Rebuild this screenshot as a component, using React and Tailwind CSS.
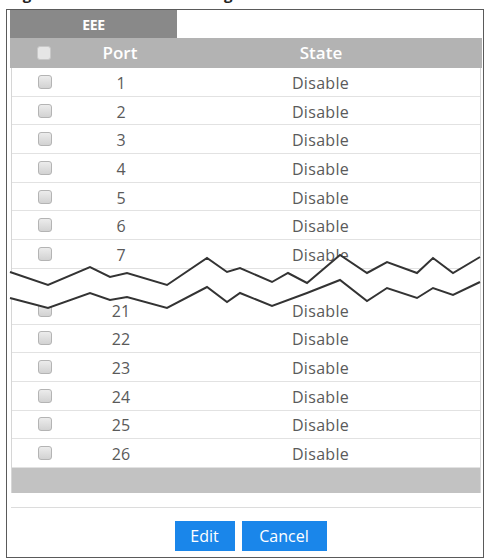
import React from 'react';

const top = [
  [10, 272], [48, 285], [90, 267], [110, 277], [127, 273], [167, 285], [207, 258], [227, 272],
  [240, 268], [272, 282], [288, 273], [307, 283], [340, 255], [367, 273], [387, 262], [417, 273],
  [433, 258], [453, 273], [480, 257],
];
const bottom = [
  [10, 298], [48, 308], [90, 293], [110, 300], [127, 297], [167, 308], [207, 287], [227, 302],
  [240, 293], [272, 306], [307, 293], [340, 280], [367, 301], [387, 288], [417, 298], [433, 288],
  [453, 295], [480, 282],
];
const pts = (list) => list.map((p) => p.join(',')).join(' ');

function Box({ header }) {
  return (
    <span
      className={`block w-[14px] h-[14px] rounded-[3px] border ${
        header ? 'border-[#c8c8c8] bg-[#e6e6e6]' : 'border-[#b4b4b4] bg-gradient-to-b from-[#ececec] to-[#d2d2d2]'
      }`}
    />
  );
}

function Row({ port }) {
  return (
    <div className="flex items-center h-[28.7px] border-b border-[#e2e2e2] text-[#5a5a5a] text-[16px]">
      <div className="w-[64px] flex justify-center pl-[1px]">
        <Box />
      </div>
      <div className="w-[90px] text-center pt-[2px]">{port}</div>
      <div className="flex-1 text-center pt-[2px] pr-[5px] tracking-[0.3px]">Disable</div>
    </div>
  );
}

export default function App() {
  return (
    <div className="relative w-[487px] h-[560px] bg-white overflow-hidden" style={{ fontFamily: '"Open Sans", "DejaVu Sans", sans-serif' }}>
      {/* figure caption, cut off at the top edge */}
      <div className="h-[9px] overflow-hidden">
        <div className="-mt-[17px] pl-[10px] text-[15px] leading-[22px] font-bold text-[#222] whitespace-nowrap">
          Figure 88 &nbsp; Port &gt; EEE &gt; Settings
        </div>
      </div>

      <div className="ml-[6px] w-[478px] h-[549px] border border-[#5a5a5a] pl-[3px] pr-[1px] flex flex-col">
        {/* tab */}
        <div className="w-[167px] h-[28px] bg-[#898989] text-white text-[14px] font-bold flex items-center justify-center tracking-tight">
          EEE
        </div>

        {/* header */}
        <div className="flex items-center h-[30px] bg-[#b3b3b3] text-white font-semibold text-[17px]">
          <div className="w-[65px] flex justify-center pl-[2px]">
            <Box header />
          </div>
          <div className="w-[90px] text-center">Port</div>
          <div className="flex-1 text-center pr-[5px]">State</div>
        </div>

        {/* rows */}
        <div className="mx-[1px] border-x border-[#d6d6d6]">
          {[1, 2, 3, 4, 5, 6, 7].map((p) => (
            <Row key={p} port={p} />
          ))}
          <div className="h-[27px]" />
          {[21, 22, 23, 24, 25, 26].map((p) => (
            <Row key={p} port={p} />
          ))}
          <div className="h-[25px] bg-[#c2c2c2]" />
        </div>

        <div className="mt-[14px] mx-[1px] border-t border-[#dcdcdc]" />

        <div className="flex justify-center gap-[7px] mt-[13px] pl-[9px]">
          <button className="w-[60px] h-[30px] bg-[#1a86ea] text-white text-[16px]">Edit</button>
          <button className="w-[85px] h-[30px] bg-[#1a86ea] text-white text-[16px]">Cancel</button>
        </div>
      </div>

      {/* break marks */}
      <svg className="absolute left-0 top-0 pointer-events-none" width="487" height="560">
        <polygon points={pts([...top, ...[...bottom].reverse()])} fill="#fff" />
        <polyline points={pts(top)} fill="none" stroke="#333" strokeWidth="2" strokeLinejoin="miter" />
        <polyline points={pts(bottom)} fill="none" stroke="#333" strokeWidth="2" strokeLinejoin="miter" />
      </svg>
    </div>
  );
}
